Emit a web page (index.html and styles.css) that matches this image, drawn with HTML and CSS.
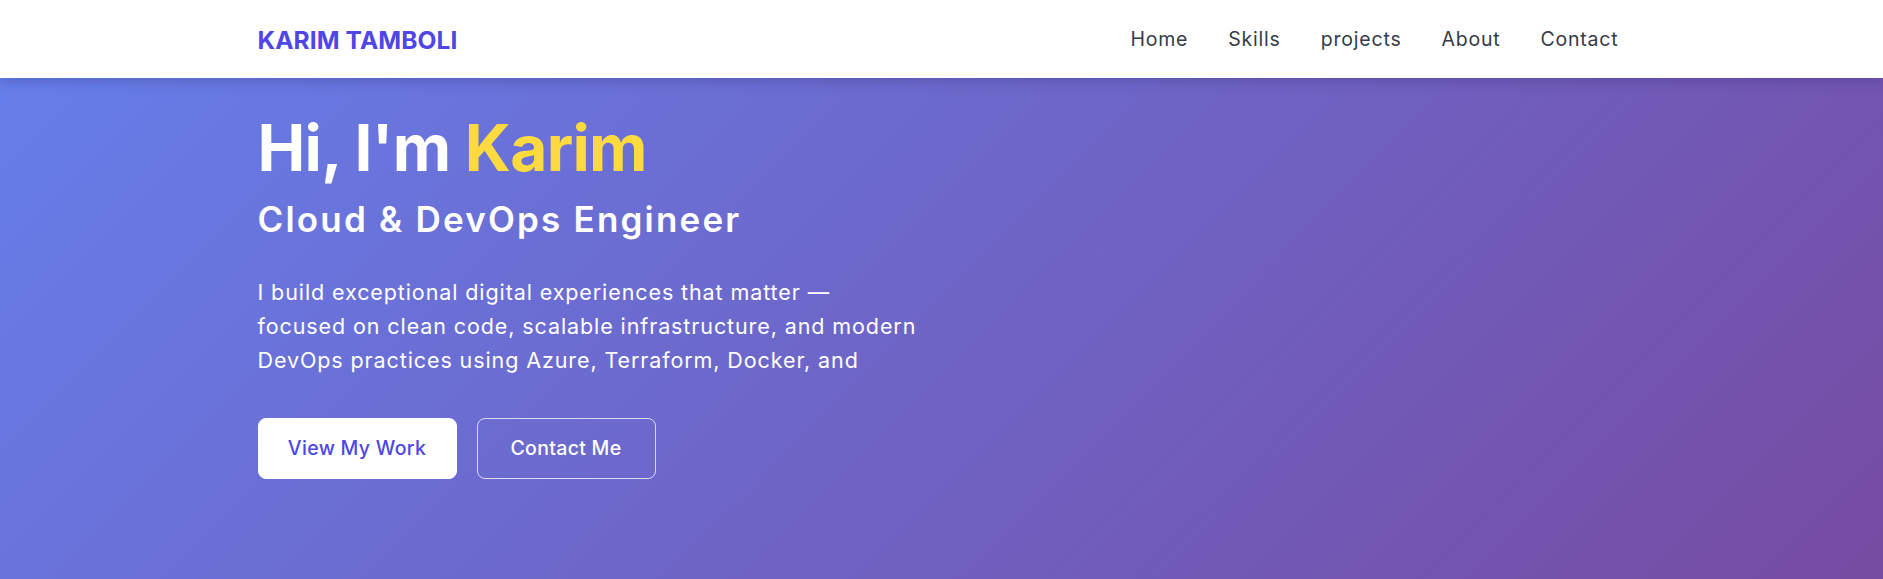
FILE: index.html
```html
<!DOCTYPE html>
<html lang="en">
<head>
<meta charset="utf-8">
<title>Karim Tamboli</title>
<link rel="stylesheet" href="styles.css">
</head>
<body>
<header class="site-header">
  <div class="container header-inner">
    <a class="logo" href="#">KARIM TAMBOLI</a>
    <nav class="nav">
      <a href="#home">Home</a>
      <a href="#skills">Skills</a>
      <a href="#projects">projects</a>
      <a href="#about">About</a>
      <a href="#contact">Contact</a>
    </nav>
  </div>
</header>
<section class="hero">
  <div class="container">
    <h1 class="hero-title">Hi, I'm <span class="accent">Karim</span></h1>
    <h2 class="hero-subtitle">Cloud &amp; DevOps Engineer</h2>
    <p class="hero-text">I build exceptional digital experiences that matter —<br>focused on clean code, scalable infrastructure, and modern DevOps practices using Azure, Terraform, Docker, and</p>
    <div class="hero-actions">
      <a class="btn btn-primary" href="#projects">View My Work</a>
      <a class="btn btn-outline" href="#contact">Contact Me</a>
    </div>
  </div>
</section>
</body>
</html>
```
FILE: styles.css
```css
* { box-sizing: border-box; }
html, body { margin: 0; padding: 0; }
body {
  font-family: Inter, "Open Sans", sans-serif;
  background: #764ba2;
  overflow: hidden;
}
a { text-decoration: none; }
.container {
  max-width: 1400px;
  margin: 0 auto;
  padding: 0 16px;
}
.site-header {
  position: relative;
  z-index: 2;
  height: 78px;
  background: #fff;
  box-shadow: 0 3px 12px rgba(40, 30, 90, 0.25);
}
.header-inner {
  height: 78px;
  display: flex;
  align-items: center;
  justify-content: space-between;
}
.logo {
  color: #4f46e5;
  font-weight: 700;
  font-size: 24.5px;
  letter-spacing: 0.1px;
  padding-top: 2px;
}
.nav {
  display: flex;
  gap: 40px;
  margin-right: 7px;
}
.nav a {
  color: #353b48;
  font-size: 19.5px;
  letter-spacing: 0.8px;
}
.hero {
  position: relative;
  z-index: 1;
  height: 501px;
  background: linear-gradient(135deg, #667eea 0%, #764ba2 100%);
  color: #fff;
  padding-top: 32px;
}
.hero-title {
  margin: 0;
  font-size: 64px;
  line-height: 1.2;
  font-weight: 700;
  letter-spacing: -0.7px;
}
.accent { color: #fdda40; }
.hero-subtitle {
  margin: 11px 0 0;
  font-size: 35px;
  line-height: 1.2;
  font-weight: 600;
  letter-spacing: 2.2px;
}
.hero-text {
  margin: 35px 0 0;
  max-width: 700px;
  font-size: 21.5px;
  line-height: 34.3px;
  letter-spacing: 0.9px;
}
.hero-actions {
  display: flex;
  gap: 20px;
  margin-top: 40px;
}
.btn {
  display: inline-flex;
  align-items: center;
  justify-content: center;
  height: 61px;
  border-radius: 8px;
  font-size: 19.5px;
  font-weight: 500;
  letter-spacing: 0.3px;
  border: 1px solid #fff;
}
.btn-primary {
  width: 199px;
  background: #fff;
  color: #4f46e5;
}
.btn-outline {
  width: 179px;
  background: transparent;
  color: #fff;
  border-color: rgba(255, 255, 255, 0.75);
}
```
